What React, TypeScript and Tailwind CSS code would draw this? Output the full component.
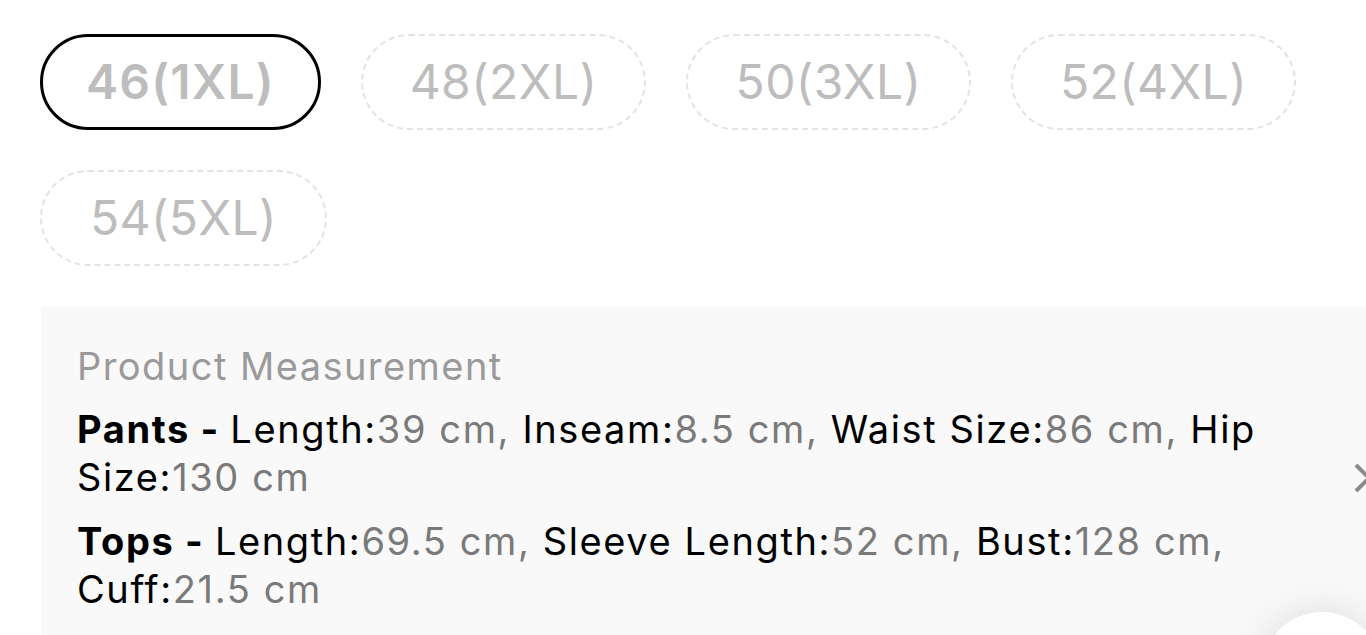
import React from "react";

const sizes = ["46(1XL)", "48(2XL)", "50(3XL)", "52(4XL)", "54(5XL)"];
const widths = ["w-[281px]", "w-[285px]", "w-[285px]", "w-[285px]", "w-[287px]"];

function Item({ k, v, last }: { k: string; v: string; last?: boolean }) {
  return (
    <>
      <span className="text-black">{k}:</span>
      <span className="text-[#7a7a7a]">{v}</span>
      {last ? null : <span className="text-[#7a7a7a]">, </span>}
    </>
  );
}

export default function App() {
  return (
    <div
      className="relative w-[1366px] h-[635px] overflow-hidden bg-white"
      style={{ fontFamily: "Inter, 'Noto Sans', sans-serif" }}
    >
      <div className="pl-[40px] pt-[34px] flex flex-wrap gap-x-[40px] gap-y-[40px] w-[1340px]">
        {sizes.map((s, i) => (
          <div
            key={s}
            className={
              i === 0
                ? `${widths[i]} h-[96px] rounded-full border-[3px] border-black flex items-center justify-center text-[48px] font-semibold tracking-[1.2px] text-[#bdbdbd]`
                : `${widths[i]} h-[96px] rounded-full border-2 border-dashed border-[#e3e3e3] flex items-center justify-center text-[48px] tracking-[0.4px] text-[#bdbdbd]`
            }
          >
            {s}
          </div>
        ))}
      </div>
      <div className="ml-[41px] mt-[41px] bg-[#f9f9f9] pl-[36px] pt-[35px] pb-[40px] w-[1400px] tracking-[1.6px]">
        <div className="text-[38px] leading-[48px] text-[#9a9a9a] tracking-[1.45px]">Product Measurement</div>
        <div className="mt-[15px] w-[1230px] text-[38px] leading-[48px]">
          <span className="font-bold text-black">Pants - </span>
          <Item k="Length" v="39 cm" />
          <Item k="Inseam" v="8.5 cm" />
          <Item k="Waist Size" v="86 cm" />
          <Item k="Hip Size" v="130 cm" last />
        </div>
        <div className="mt-[16px] w-[1230px] text-[38px] leading-[48px]">
          <span className="font-bold text-black">Tops - </span>
          <Item k="Length" v="69.5 cm" />
          <Item k="Sleeve Length" v="52 cm" />
          <Item k="Bust" v="128 cm" />
          <Item k="Cuff" v="21.5 cm" last />
        </div>
      </div>
      <svg
        className="absolute left-[1354px] top-[463px]"
        width="30"
        height="30"
        viewBox="0 0 30 30"
      >
        <path d="M2 2 L28 28 M28 2 L2 28" stroke="#8a8a8a" strokeWidth="4" fill="none" />
      </svg>
      <div className="absolute left-[1262px] top-[612px] w-[120px] h-[120px] rounded-full bg-white shadow-[0_0_40px_rgba(0,0,0,0.12)]" />
    </div>
  );
}
